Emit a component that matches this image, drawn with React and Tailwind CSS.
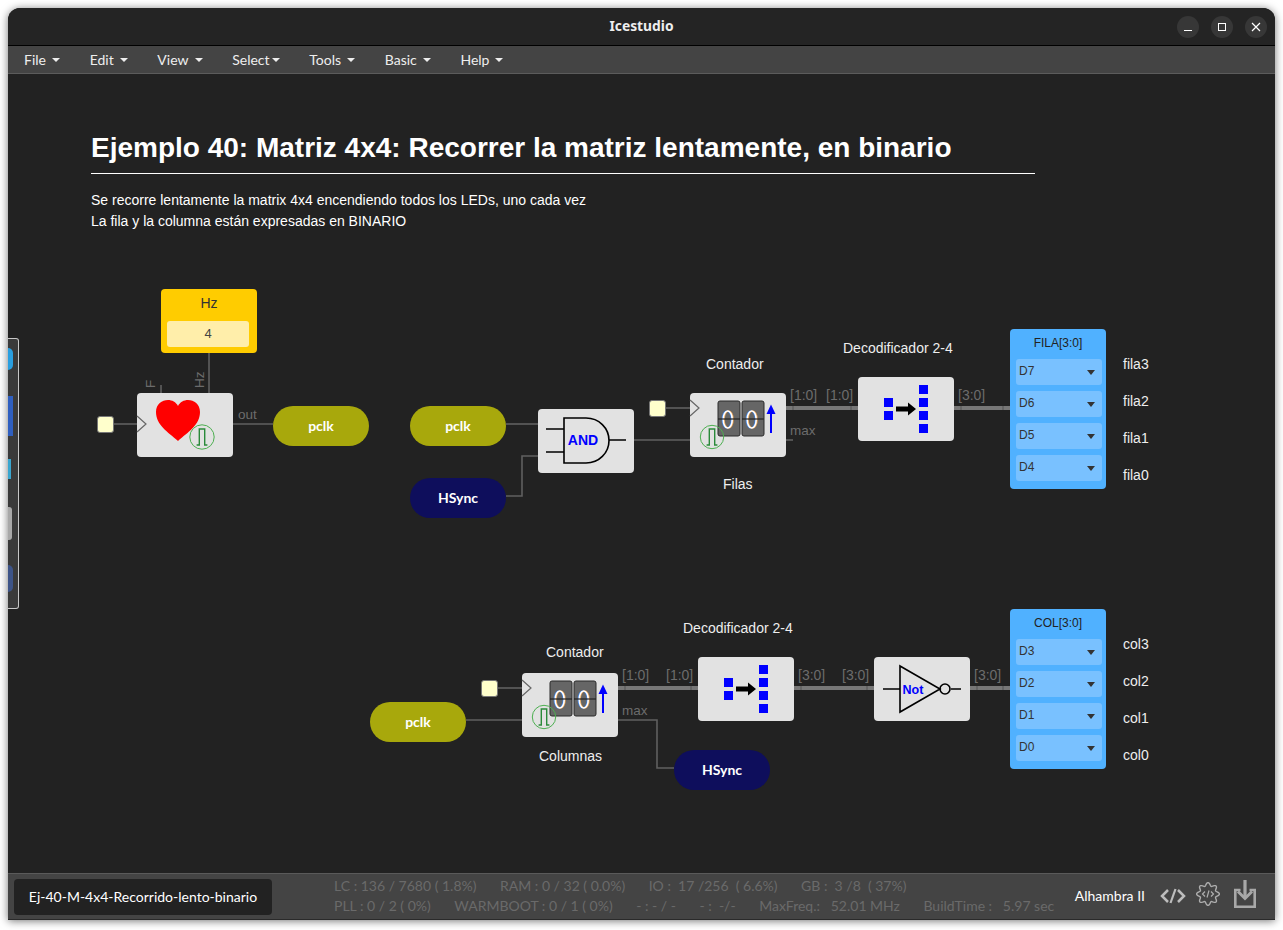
import React from "react";

const menus = ["File", "Edit", "View", "Select", "Tools", "Basic", "Help"];

// wavy outline for the footer gear icon
const gearPath = (() => {
  const pts = [];
  for (let i = 0; i < 96; i++) {
    const a = (i / 96) * Math.PI * 2;
    const r = 9.8 + 1.6 * Math.cos(8 * a);
    pts.push(`${(12 + r * Math.sin(a)).toFixed(2)} ${(12 - r * Math.cos(a)).toFixed(2)}`);
  }
  return `M${pts.join("L")}Z`;
})();

function Pill({ className, label }) {
  return (
    <div className={`absolute w-[96px] h-[40px] rounded-[20px] flex items-center justify-center pb-[2px] text-white text-[14px] font-bold font-['Lato',sans-serif] ${className}`}>
      {label}
    </div>
  );
}

function Clk({ className }) {
  return <div className={`absolute w-[17px] h-[17px] rounded-[3px] bg-[#ffffcc] border border-[#777] ${className}`} />;
}

function Label({ className, children }) {
  return <div className={`absolute text-[14px] leading-[16px] text-[#eeeeee] whitespace-nowrap ${className}`}>{children}</div>;
}

function Block({ className, children }) {
  return (
    <div className={`absolute w-[96px] h-[64px] rounded-[4px] bg-[#e2e2e2] ${className}`}>
      <svg width="96" height="64" viewBox="0 0 96 64" className="block overflow-visible">{children}</svg>
    </div>
  );
}

function Pulse({ cx, cy, r = 11.7 }) {
  return (
    <g>
      <circle cx={cx} cy={cy} r={r} fill="none" stroke="#4caf50" strokeWidth="1" />
      <path d={`M${cx - 5.4} ${cy + 8}h2.7v-16h5.4v16h2.7`} fill="none" stroke="#2a8a3a" strokeWidth="1.4" />
    </g>
  );
}

function ClockPin({ y }) {
  return <path d={`M0 ${y - 8}L9 ${y}L0 ${y + 8}`} fill="#e2e2e2" stroke="#666" strokeWidth="1.2" />;
}

function Digit({ x }) {
  const cx = x + 9.7;
  return (
    <g>
      <rect x={x} y="8" width="22" height="35" rx="2" fill="#666" stroke="#2a2a2a" strokeWidth="1" />
      <ellipse cx={cx - 0.8} cy="26.5" rx="4.5" ry="8.5" fill="none" stroke="#3a7fe0" strokeWidth="1.6" />
      <ellipse cx={cx + 0.8} cy="26.5" rx="4.5" ry="8.5" fill="none" stroke="#e8a050" strokeWidth="1.6" />
      <ellipse cx={cx} cy="26.5" rx="4.5" ry="8.5" fill="none" stroke="#ffffff" strokeWidth="1.6" />
      <line x1={x} y1="26" x2={x + 22} y2="26" stroke="#222" strokeWidth="1.2" />
    </g>
  );
}

function Counter({ className }) {
  return (
    <Block className={className}>
      <ClockPin y={15} />
      <Digit x={28} />
      <Digit x={52} />
      <path d="M81 40V20" stroke="#0000ff" strokeWidth="2" />
      <path d="M76.5 21L81 11.5L85.5 21Z" fill="#0000ff" />
      <Pulse cx={22} cy={44} />
    </Block>
  );
}

function Decoder({ className }) {
  return (
    <Block className={className}>
      <rect x="26" y="21" width="9" height="9" fill="#0000ff" />
      <rect x="26" y="34" width="9" height="9" fill="#0000ff" />
      <rect x="61" y="8" width="9" height="9" fill="#0000ff" />
      <rect x="61" y="21" width="9" height="9" fill="#0000ff" />
      <rect x="61" y="34" width="9" height="9" fill="#0000ff" />
      <rect x="61" y="47" width="9" height="9" fill="#0000ff" />
      <path d="M38 29.5h12v-4l8 6.5l-8 6.5v-4H38Z" fill="#000" />
    </Block>
  );
}

function OutputBlock({ className, title, pins }) {
  return (
    <div className={`absolute w-[96px] h-[160px] rounded-[4px] bg-[#50b1ff] px-[6px] pt-[7px] ${className}`}>
      <div className="text-center text-[12px] leading-[14px] text-[#222]">{title}</div>
      <div className="mt-[9px] flex flex-col gap-[6px]">
        {pins.map((p) => (
          <div key={p} className="h-[26px] w-[86px] rounded-[3px] bg-[#79c1ff] flex items-center justify-between pl-[3px] pr-[7px] text-[12px] text-[#333] pb-[2px]">
            <span>{p}</span>
            <span className="mt-[3px] w-0 h-0 border-x-[4px] border-x-transparent border-t-[5px] border-t-[#333]" />
          </div>
        ))}
      </div>
    </div>
  );
}

function Thin({ d }) {
  return <path d={d} fill="none" stroke="#606060" strokeWidth="1.6" />;
}

function Thick({ x1, x2, y }) {
  return (
    <g>
      <line x1={x1} y1={y} x2={x2} y2={y} stroke="#777" strokeWidth="4" />
      <line x1={x1 + 7} y1={y - 2} x2={x1 + 7} y2={y + 2} stroke="#555" strokeWidth="1" />
      <line x1={x2 - 7} y1={y - 2} x2={x2 - 7} y2={y + 2} stroke="#555" strokeWidth="1" />
    </g>
  );
}

function WireLabel({ x, y, children }) {
  return <text x={x} y={y} fontSize="14" fill="#6c6c6c">{children}</text>;
}

function Wires() {
  return (
    <svg width="1267" height="799" viewBox="8 74 1267 799" className="absolute left-0 top-0 font-['Liberation_Sans',sans-serif]">
      <Thin d="M114 424H137" />
      <Thin d="M209 353V393" />
      <Thin d="M161 385V393" />
      <Thin d="M233 424H273" />
      <Thin d="M506 424H538" />
      <Thin d="M506 496H522V456H538" />
      <Thin d="M634 440H690" />
      <Thin d="M666 408H690" />
      <Thin d="M786 440H793" />
      <Thick x1={786} x2={858} y={408} />
      <Thick x1={954} x2={1010} y={408} />

      <Thin d="M466 720H522" />
      <Thin d="M498 688H522" />
      <Thin d="M618 720H657V768H674" />
      <Thick x1={618} x2={698} y={688} />
      <Thick x1={794} x2={874} y={688} />
      <Thick x1={970} x2={1010} y={688} />

      <text x="238" y="419" fontSize="13.5" fill="#6c6c6c">out</text>
      <text x="790" y="435" fontSize="13.5" fill="#6c6c6c">max</text>
      <text x="622" y="715" fontSize="13.5" fill="#6c6c6c">max</text>
      <text transform="translate(155 388) rotate(-90)" fontSize="13.5" fill="#6c6c6c">F</text>
      <text transform="translate(204 388) rotate(-90)" fontSize="13.5" fill="#6c6c6c">Hz</text>
      <WireLabel x={790} y={400}>[1:0]</WireLabel>
      <WireLabel x={826} y={400}>[1:0]</WireLabel>
      <WireLabel x={958} y={400}>[3:0]</WireLabel>
      <WireLabel x={622} y={680}>[1:0]</WireLabel>
      <WireLabel x={666} y={680}>[1:0]</WireLabel>
      <WireLabel x={798} y={680}>[3:0]</WireLabel>
      <WireLabel x={842} y={680}>[3:0]</WireLabel>
      <WireLabel x={974} y={680}>[3:0]</WireLabel>
    </svg>
  );
}

function Canvas() {
  return (
    <div className="relative flex-1 bg-[#222222] overflow-hidden font-['Liberation_Sans',sans-serif]">
      <div className="absolute left-[83px] top-[55px] w-[944px] text-white">
        <div className="border-b border-white pb-[6px] text-[28px] leading-[38px] font-bold whitespace-nowrap">
          Ejemplo 40: Matriz 4x4: Recorrer la matriz lentamente, en binario
        </div>
        <div className="mt-[16px] text-[14px] leading-[21px]">
          <div>Se recorre lentamente la matrix 4x4 encendiendo todos los LEDs, uno cada vez</div>
          <div>La fila y la columna están expresadas en BINARIO</div>
        </div>
      </div>

      <Wires />

      <div className="absolute left-[153px] top-[215px] w-[96px] h-[64px] rounded-[4px] bg-[#ffcc00] px-[6px] pt-[6px]">
        <div className="text-center text-[14px] leading-[16px] text-[#333]">Hz</div>
        <div className="mt-[10px] h-[26px] w-[82px] rounded-[3px] bg-[#ffeeaa] flex items-center justify-center text-[13px] text-[#444]">4</div>
      </div>

      <Clk className="left-[89px] top-[342px]" />
      <Block className="left-[129px] top-[319px]">
        <ClockPin y={31} />
        <path d="M41 48C31 39 19 32 19 19C19 11 25 7 31 7C35 7 39 9 41 13C43 9 47 7 51 7C57 7 63 11 63 19C63 32 51 39 41 48Z" fill="#ff0000" />
        <circle cx="65" cy="44" r="12.2" fill="#e2e2e2" />
        <Pulse cx={65} cy={44} r={12.2} />
      </Block>
      <Pill className="left-[265px] top-[332px] bg-[#a8a80c]" label="pclk" />

      <Pill className="left-[402px] top-[332px] bg-[#a8a80c]" label="pclk" />
      <Pill className="left-[402px] top-[404px] bg-[#0e0e5c]" label="HSync" />
      <Block className="left-[530px] top-[335px]">
        <path d="M8 20H26M8 43H26M71 31H88" stroke="#000" strokeWidth="1.6" />
        <path d="M26 9H48C61 9 71 19 71 31.5C71 44 61 54 48 54H26Z" fill="none" stroke="#000" strokeWidth="1.6" />
        <text x="45" y="36" fontSize="14" fontWeight="700" fill="#0000ff" textAnchor="middle" fontFamily="Liberation Sans, sans-serif">AND</text>
      </Block>

      <Clk className="left-[641px] top-[326px]" />
      <Counter className="left-[682px] top-[319px]" />
      <Label className="left-[698px] top-[282px]">Contador</Label>
      <Label className="left-[715px] top-[402px]">Filas</Label>
      <Decoder className="left-[850px] top-[303px]" />
      <Label className="left-[835px] top-[266px]">Decodificador 2-4</Label>
      <OutputBlock className="left-[1002px] top-[255px]" title="FILA[3:0]" pins={["D7", "D6", "D5", "D4"]} />
      <Label className="left-[1115px] top-[282px]">fila3</Label>
      <Label className="left-[1115px] top-[319px]">fila2</Label>
      <Label className="left-[1115px] top-[356px]">fila1</Label>
      <Label className="left-[1115px] top-[393px]">fila0</Label>

      <Pill className="left-[362px] top-[628px] bg-[#a8a80c]" label="pclk" />
      <Clk className="left-[473px] top-[606px]" />
      <Counter className="left-[514px] top-[599px]" />
      <Label className="left-[538px] top-[570px]">Contador</Label>
      <Label className="left-[531px] top-[674px]">Columnas</Label>
      <Decoder className="left-[690px] top-[583px]" />
      <Label className="left-[675px] top-[546px]">Decodificador 2-4</Label>
      <Block className="left-[866px] top-[583px]">
        <path d="M9 32H26M77 32H87" stroke="#000" strokeWidth="1.6" />
        <path d="M26 9L66 32L26 55Z" fill="none" stroke="#000" strokeWidth="1.6" />
        <circle cx="71" cy="32" r="5" fill="none" stroke="#000" strokeWidth="1.6" />
        <text x="39" y="36.5" fontSize="12.5" fontWeight="700" fill="#0000ff" textAnchor="middle" fontFamily="Liberation Sans, sans-serif">Not</text>
      </Block>
      <Pill className="left-[666px] top-[676px] bg-[#0e0e5c]" label="HSync" />
      <OutputBlock className="left-[1002px] top-[535px]" title="COL[3:0]" pins={["D3", "D2", "D1", "D0"]} />
      <Label className="left-[1115px] top-[562px]">col3</Label>
      <Label className="left-[1115px] top-[599px]">col2</Label>
      <Label className="left-[1115px] top-[636px]">col1</Label>
      <Label className="left-[1115px] top-[673px]">col0</Label>

      {/* dock of the desktop, peeking over the window edge */}
      <div className="absolute left-0 top-[264px] w-[11px] h-[271px] rounded-r-[3px] border border-l-0 border-[#c8c8c8] bg-[#3a3a3a] overflow-hidden">
        <div className="mt-[9px] w-[5px] h-[22px] rounded-r-[5px] bg-[#2a9fe0]" />
        <div className="mt-[26px] w-[5px] h-[40px] bg-[#2f5fc0]" />
        <div className="mt-[23px] w-[3px] h-[20px] bg-[#3aa6cf]" />
        <div className="mt-[28px] w-[4px] h-[33px] rounded-r-[3px] bg-[#a8a8a8]" />
        <div className="mt-[25px] w-[5px] h-[27px] rounded-r-[13px] bg-[#3d5488]" />
      </div>
    </div>
  );
}

function Footer() {
  return (
    <div className="h-[47px] shrink-0 bg-[#444444] border-t border-[#5a5a5a] border-b-[#2a2a2a] border-b flex items-center font-['Lato',sans-serif]">
      <div className="ml-[6px] h-[36px] w-[258px] rounded-[4px] bg-[#222222] flex items-center justify-center pb-[1px] text-[14px] text-white whitespace-nowrap">
        Ej-40-M-4x4-Recorrido-lento-binario
      </div>
      <div className="ml-[62px] -mt-[2px] flex flex-col text-[14px] leading-[20px] text-[#6a6a6a] whitespace-pre">
        <div className="flex gap-[23.5px]">
          <span>LC : 136 / 7680 ( 1.8%)</span>
          <span>RAM : 0 / 32 ( 0.0%)</span>
          <span>IO :  17 /256  ( 6.6%)</span>
          <span>GB :  3 /8  ( 37%)</span>
        </div>
        <div className="flex gap-[23.5px]">
          <span>PLL : 0 / 2 ( 0%)</span>
          <span>WARMBOOT : 0 / 1 ( 0%)</span>
          <span>- : - / -</span>
          <span>- :  -/-</span>
          <span>MaxFreq.:   52.01 MHz</span>
          <span>BuildTime :   5.97 sec</span>
        </div>
      </div>
      <div className="ml-auto mr-[19px] flex items-center">
        <span className="-mt-[2px] text-[14px] text-white whitespace-nowrap">Alhambra II</span>
        <svg width="26" height="16" viewBox="0 0 26 16" fill="none" stroke="#bdbdbd" strokeWidth="2.5" className="ml-[15px] -mt-[2px]">
          <path d="M8 2L2 8L8 14M18 2L24 8L18 14" />
          <path d="M15.5 1L10.5 15" strokeWidth="2.2" />
        </svg>
        <svg width="24" height="24" viewBox="0 0 24 24" fill="none" stroke="#aeaeae" className="ml-[10px] -mt-[5px]">
          <path d={gearPath} strokeWidth="1.4" />
          <path d="M9 9.5L6.5 12L9 14.5M15 9.5L17.5 12L15 14.5M13 8.5L11 15.5" strokeWidth="1.2" />
        </svg>
        <svg width="22" height="28" viewBox="0 0 22 28" fill="none" stroke="#a8a8a8" className="ml-[14px] -mt-[5px]">
          <path d="M6.5 10H1.3V26.7H20.7V10H15.5" strokeWidth="2.6" />
          <path d="M11 0V17" strokeWidth="3.2" />
          <path d="M4 11.5L11 18.5L18 11.5" strokeWidth="3" />
        </svg>
      </div>
    </div>
  );
}

export default function App() {
  return (
    <div className="w-[1283px] h-[930px] bg-white pt-[8px] pl-[8px] overflow-hidden">
      <div className="w-[1267px] h-[912px] flex flex-col rounded-t-[12px] overflow-hidden shadow-[0_1px_8px_rgba(0,0,0,0.55)] bg-[#222222]">
        <div className="relative h-[38px] shrink-0 bg-[#242424] border-b border-black flex items-center justify-center">
          <span className="text-[13.8px] font-bold text-[#eeeeee] font-['Noto_Sans',sans-serif]">Icestudio</span>
          <div className="absolute right-[8px] top-[8px] flex gap-[12px]">
            <div className="w-[22px] h-[22px] rounded-full bg-[#373737] flex items-center justify-center">
              <div className="mt-[6px] w-[8px] h-[1px] bg-white" />
            </div>
            <div className="w-[22px] h-[22px] rounded-full bg-[#373737] flex items-center justify-center">
              <div className="w-[8px] h-[8px] border border-white" />
            </div>
            <div className="w-[22px] h-[22px] rounded-full bg-[#373737] flex items-center justify-center">
              <svg width="10" height="10" viewBox="0 0 10 10" stroke="#fff" strokeWidth="1.2"><path d="M1 1L9 9M9 1L1 9" /></svg>
            </div>
          </div>
        </div>
        <div className="h-[28px] shrink-0 bg-[#444444] border-b border-[#5c5c5c] flex items-center gap-[29.7px] pl-[16px] text-[14px] text-[#eeeeee] font-['Lato',sans-serif]">
          {menus.map((m) => (
            <div key={m} className="flex items-center">
              <span>{m}</span>
              <span className={`${m === "Select" ? "ml-[2px]" : "ml-[6px]"} mt-[1px] w-0 h-0 border-x-[4px] border-x-transparent border-t-[4px] border-t-[#eeeeee]`} />
            </div>
          ))}
        </div>
        <Canvas />
        <Footer />
      </div>
    </div>
  );
}
